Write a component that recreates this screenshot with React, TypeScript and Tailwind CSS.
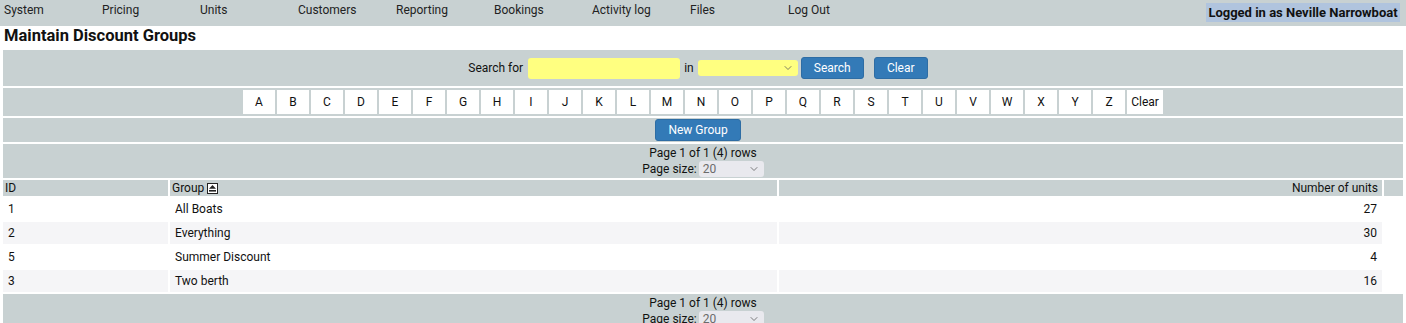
import { ChevronDown } from 'lucide-react';

const navItems = ['System', 'Pricing', 'Units', 'Customers', 'Reporting', 'Bookings', 'Activity log', 'Files', 'Log Out'];
const letters = 'ABCDEFGHIJKLMNOPQRSTUVWXYZ'.split('');

const groups = [
  { id: 1, name: 'All Boats', units: 27 },
  { id: 2, name: 'Everything', units: 30 },
  { id: 5, name: 'Summer Discount', units: 4 },
  { id: 3, name: 'Two berth', units: 16 },
];

function FakeSelect({ value, className }: { value?: string; className: string }) {
  return (
    <div className={`flex items-center justify-between rounded-[3px] ${className}`}>
      <span className="pl-1 text-[#6b6b6b]">{value}</span>
      <ChevronDown className="mr-1 h-3 w-3 text-[#555]" strokeWidth={1.5} />
    </div>
  );
}

function Pager() {
  return (
    <div className="flex flex-col items-center py-[1px] leading-[14px]">
      <div>Page 1 of 1 (4) rows</div>
      <div className="mt-[1px] flex items-center gap-[2px]">
        <span>Page size:</span>
        <FakeSelect value="20" className="h-[16px] w-[65px] bg-[#e9e9ee] text-[12px]" />
      </div>
    </div>
  );
}

export default function App() {
  return (
    <div className="min-h-screen bg-white text-[12px] text-[#111] font-['Roboto','Liberation_Sans',sans-serif]">
      {/* Top navigation */}
      <div className="flex h-[26px] items-start justify-between bg-[#c8d1d2]">
        <div className="flex pt-[3px] pl-[4px]">
          {navItems.map(item => (
            <div key={item} className="w-[98px] leading-[14px] text-[#222]">{item}</div>
          ))}
        </div>
        <div className="mt-[3px] mr-[6px] w-[194px] bg-[#b0c4de] text-center text-[13px] leading-[19px] font-bold text-[#111]">
          Logged in as Neville Narrowboat
        </div>
      </div>

      <h1 className="pl-[4px] pb-[2px] text-[16.5px] font-bold leading-[20px]">Maintain Discount Groups</h1>

      <table className="w-full border-separate border-spacing-[2px] px-[1px]">
        <tbody>
          {/* Search */}
          <tr>
            <td colSpan={4} className="h-[36px] bg-[#c8d1d2] p-0">
              <div className="flex items-center justify-center pr-[10px]">
                <span className="mr-[5px]">Search for</span>
                <div className="h-[21px] w-[152px] rounded-[3px] bg-[#ffff80]" />
                <span className="ml-[4px] mr-[4px]">in</span>
                <FakeSelect className="h-[16px] w-[100px] bg-[#ffff80]" />
                <button className="ml-[3px] h-[22px] w-[63px] rounded-[3px] border border-[#2e6da4] bg-[#337ab7] text-[12px] text-white">Search</button>
                <button className="ml-[10px] h-[22px] w-[54px] rounded-[3px] border border-[#2e6da4] bg-[#337ab7] text-[12px] text-white">Clear</button>
              </div>
            </td>
          </tr>

          {/* Alphabet filter */}
          <tr>
            <td colSpan={4} className="h-[28px] bg-[#c8d1d2] p-0">
              <div className="flex justify-center gap-[2px]">
                {letters.map(l => (
                  <div key={l} className="flex h-[24px] w-[32px] items-center justify-center bg-white text-[12px]">{l}</div>
                ))}
                <div className="flex h-[24px] w-[36px] items-center justify-center bg-white">Clear</div>
              </div>
            </td>
          </tr>

          {/* New group */}
          <tr>
            <td colSpan={4} className="h-[24px] bg-[#c8d1d2] p-0">
              <div className="flex justify-center pr-[10px]">
                <button className="h-[22px] w-[86px] rounded-[3px] border border-[#2e6da4] bg-[#337ab7] text-[12px] text-white">New Group</button>
              </div>
            </td>
          </tr>

          {/* Pager */}
          <tr>
            <td colSpan={4} className="h-[34px] bg-[#c8d1d2] p-0">
              <Pager />
            </td>
          </tr>

          {/* Header */}
          <tr className="h-[16px] leading-[16px]">
            <th className="w-[165px] bg-[#c8d1d2] px-[2px] py-0 text-left font-normal">ID</th>
            <th className="w-[607px] bg-[#c8d1d2] px-[2px] py-0 text-left font-normal">
              <span className="inline-flex items-center gap-[2px]">
                Group
                <svg width="11" height="11" viewBox="0 0 11 11" className="ml-[1px]">
                  <rect x="0.5" y="0.5" width="10" height="10" fill="white" stroke="#222" />
                  <path d="M5.5 2 L9 5.8 L2 5.8 Z" fill="#222" />
                  <rect x="2" y="7" width="7" height="1.6" fill="#222" />
                </svg>
              </span>
            </th>
            <th className="bg-[#c8d1d2] px-[4px] py-0 text-right font-normal">Number of units</th>
            <th className="w-[19px] bg-[#c8d1d2] p-0" />
          </tr>

          {groups.map((g, i) => (
            <tr key={g.id} className="h-[22px]">
              <td className={`px-[5px] py-0 ${i % 2 === 1 ? 'bg-[#f5f5f7]' : 'bg-white'}`}>{g.id}</td>
              <td className={`px-[5px] py-0 ${i % 2 === 1 ? 'bg-[#f5f5f7]' : 'bg-white'}`}>{g.name}</td>
              <td className={`px-[5px] py-0 text-right ${i % 2 === 1 ? 'bg-[#f5f5f7]' : 'bg-white'}`}>{g.units}</td>
              <td className="bg-white p-0" />
            </tr>
          ))}

          {/* Bottom pager */}
          <tr>
            <td colSpan={4} className="h-[34px] bg-[#c8d1d2] p-0">
              <Pager />
            </td>
          </tr>
        </tbody>
      </table>
    </div>
  );
}
